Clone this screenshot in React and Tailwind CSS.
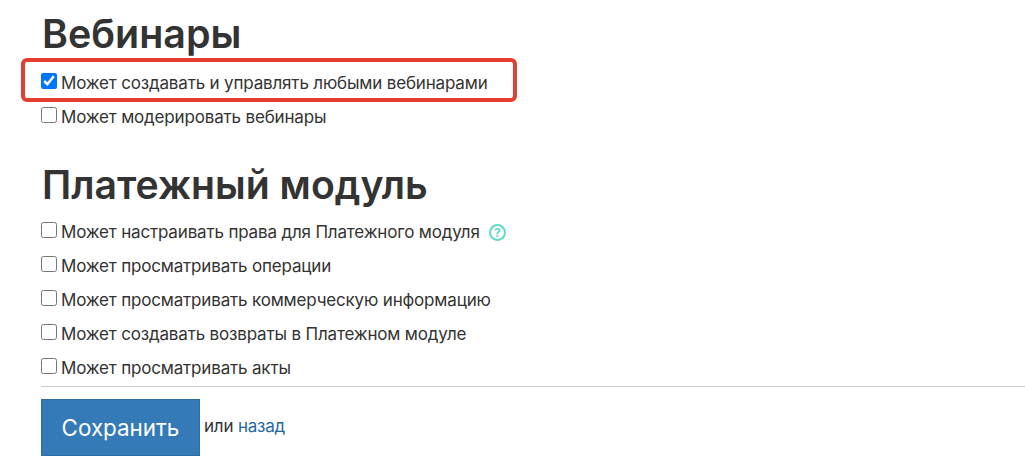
import React from "react";

const webinars = [
    { id: 1, label: "Может создавать и управлять любыми вебинарами", checked: true, highlight: true },
    { id: 2, label: "Может модерировать вебинары" },
];

const payments = [
    { id: 3, label: "Может настраивать права для Платежного модуля", hint: true },
    { id: 4, label: "Может просматривать операции" },
    { id: 5, label: "Может просматривать коммерческую информацию" },
    { id: 6, label: "Может создавать возвраты в Платежном модуле" },
    { id: 7, label: "Может просматривать акты" },
];

const Row = ({ item }) => (
    <label className="relative flex h-[34px] items-center text-[17px] leading-[24px] tracking-[-0.17px] text-[#333]">
        <input
            type="checkbox"
            defaultChecked={item.checked}
            className="mr-[4px] -mt-[4px] h-[16px] w-[16px] shrink-0 rounded-[3px] accent-[#0075ff]"
        />
        <span>{item.label}</span>
        {item.hint && (
            <span className="ml-[9px] mt-[1px] flex h-[17px] w-[17px] items-center justify-center rounded-full border-2 border-[#5fd8c9] text-[12px] font-bold leading-none text-[#5fd8c9]">
                ?
            </span>
        )}
        {item.highlight && (
            <span className="absolute -left-[20px] top-[-8px] h-[44px] w-[496px] rounded-[6px] border-[4px] border-[#e53e30]" />
        )}
    </label>
);

const App = () => {
    return (
        <div className="h-[468px] w-[1025px] overflow-hidden bg-white pl-[41px] pt-[8px] font-['Inter','Noto_Sans',sans-serif]">
            <h2 className="h-[48px] pl-[1px] text-[39.4px] font-semibold leading-[52px] text-[#333]">Вебинары</h2>
            <div className="mt-[10px]">
                {webinars.map((item) => <Row key={item.id} item={item} />)}
            </div>
            <h2 className="mt-[25px] h-[48px] pl-[1px] text-[39.2px] font-semibold leading-[52px] text-[#333]">Платежный модуль</h2>
            <div className="mt-[8px]">
                {payments.map((item) => <Row key={item.id} item={item} />)}
            </div>
            <div className="mt-[1px] border-t border-[#ccc] pt-[12px]">
                <div className="flex items-start">
                    <button className="h-[57px] w-[159px] border border-[#2e6da4] bg-[#337ab7] text-[22.4px] text-white">
                        Сохранить
                    </button>
                    <span className="ml-[4px] mt-[15px] text-[17px] leading-[24px] tracking-[-0.2px] text-[#333]">
                        или <a className="text-[#23689b]">назад</a>
                    </span>
                </div>
            </div>
        </div>
    );
};

export default App;
